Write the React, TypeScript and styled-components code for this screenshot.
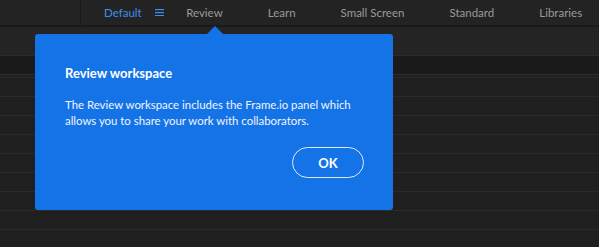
import React from 'react';
import styled, { createGlobalStyle } from 'styled-components';

const GlobalStyle = createGlobalStyle`
  html, body {
    margin: 0;
    padding: 0;
    background: #1e1e1e;
    overflow: hidden;
  }
  body {
    font-family: Lato, "Noto Sans", sans-serif;
  }
`;

const Page = styled.div`
  position: relative;
  width: 599px;
  height: 247px;
  background: #1e1e1e;
  overflow: hidden;
`;

const TopBar = styled.div`
  display: flex;
  height: 25px;
  background: #232323;
  border-bottom: 2px solid #1a1a1a;
`;

const LeftArea = styled.div`
  flex: 0 0 80px;
  border-right: 1px solid #1a1a1a;
`;

const Tabs = styled.nav`
  display: flex;
  align-items: center;
  flex: 0 0 auto;
`;

const Tab = styled.div<{ $active?: boolean }>`
  display: flex;
  align-items: center;
  gap: 13px;
  padding: ${(p) => (p.$active ? '0 0 0 23px' : '0 22.5px')};
  height: 25px;
  font-size: 11.5px;
  color: ${(p) => (p.$active ? '#3d8fef' : '#9a9a9a')};
  white-space: nowrap;
`;

const MenuIcon = styled.svg`
  display: block;
`;

const ToolBand = styled.div`
  height: 28px;
  background: #242424;
  border-bottom: 1px solid #2c2c2c;
`;

const DarkBand = styled.div`
  height: 18px;
  background: #1a1a1a;
  border-bottom: 1px solid #2e2e2e;
`;

const Gap = styled.div`
  height: 2px;
  background: #1f1f1f;
  border-bottom: 1px solid #2b2b2b;
`;

const Rows = styled.div`
  display: flex;
  flex-direction: column;
`;

const Row = styled.div`
  height: 18px;
  background: #1f1f1f;
  border-bottom: 1px solid #2a2a2a;
`;

const Popup = styled.div`
  position: absolute;
  left: 35px;
  top: 34px;
  width: 358px;
  height: 176px;
  box-sizing: border-box;
  background: #1473e6;
  border-radius: 3px;
  padding: 30px 29px 0 30px;
  display: flex;
  flex-direction: column;
  color: #ffffff;
`;

const Arrow = styled.div`
  position: absolute;
  top: -8px;
  left: 172px;
  width: 0;
  height: 0;
  border-left: 8px solid transparent;
  border-right: 8px solid transparent;
  border-bottom: 8px solid #1473e6;
`;

const Title = styled.div`
  font-size: 13px;
  font-weight: 700;
  line-height: 18px;
  margin-bottom: 15px;
`;

const Body = styled.div`
  font-size: 11.4px;
  line-height: 16px;
  color: #f2f4ff;
  white-space: nowrap;
`;

const Actions = styled.div`
  display: flex;
  justify-content: flex-end;
  margin-top: 18px;
`;

const OkButton = styled.button`
  width: 72px;
  height: 31px;
  box-sizing: border-box;
  border-radius: 16px;
  border: 1.5px solid rgba(255, 255, 255, 0.85);
  background: transparent;
  color: #ffffff;
  font-family: inherit;
  font-size: 13px;
  font-weight: 700;
  cursor: pointer;
`;

const tabs = ['Review', 'Learn', 'Small Screen', 'Standard', 'Libraries'];

export default function App() {
  return (
    <Page>
      <GlobalStyle />
      <TopBar>
        <LeftArea />
        <Tabs>
          <Tab $active>
            Default
            <MenuIcon width="9" height="7" viewBox="0 0 9 7">
              <rect x="0" y="0" width="9" height="1.2" fill="#3d8fef" />
              <rect x="0" y="3" width="9" height="1.2" fill="#3d8fef" />
              <rect x="0" y="6" width="9" height="1.2" fill="#3d8fef" />
            </MenuIcon>
          </Tab>
          {tabs.map((t) => (
            <Tab key={t}>{t}</Tab>
          ))}
        </Tabs>
      </TopBar>
      <ToolBand />
      <DarkBand />
      <Gap />
      <Rows>
        {Array.from({ length: 9 }).map((_, i) => (
          <Row key={i} />
        ))}
      </Rows>
      <Popup>
        <Arrow />
        <Title>Review workspace</Title>
        <Body>
          The Review workspace includes the Frame.io panel which
          <br />
          allows you to share your work with collaborators.
        </Body>
        <Actions>
          <OkButton>OK</OkButton>
        </Actions>
      </Popup>
    </Page>
  );
}
